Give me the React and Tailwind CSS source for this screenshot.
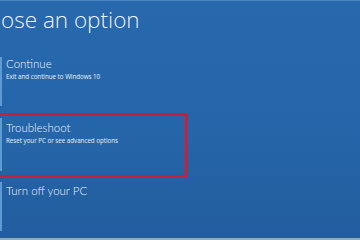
const OPTIONS = [
  { title: "Continue", desc: "Exit and continue to Windows 10", bar: "mt-[24px] h-[49px]", text: "pt-[0px]" },
  { title: "Troubleshoot", desc: "Reset your PC or see advanced options", bar: "mt-[12px] h-[53px]", text: "pt-[3px]" },
  { title: "Turn off your PC", desc: "", bar: "mt-[11px] h-[49px]", text: "pt-[2px]" },
];

function Option({ title, desc, bar, text }) {
  return (
    <div className={`flex ${bar}`}>
      <div className="w-[2px] bg-[#5f9bd3]" />
      <div className={`pl-[4px] ${text}`}>
        <div
          className="text-[11.5px] leading-[14px] font-light text-white/95"
          style={{ fontFamily: 'Lato, "Open Sans", sans-serif' }}
        >
          {title}
        </div>
        {desc && (
          <div className="mt-[2px] text-[6.2px] leading-[8px] text-white/90">{desc}</div>
        )}
      </div>
    </div>
  );
}

export default function App() {
  return (
    <div
      className="relative h-[240px] w-[360px] overflow-hidden bg-gradient-to-b from-[#2868ad] via-[#2566aa] to-[#225d9e]"
      style={{ fontFamily: '"Open Sans", "Noto Sans", sans-serif' }}
    >
      <div className="h-[1px] bg-[#4f86c2]" />
      <h1 className="pl-[1px] pt-[6px] text-[22.5px] font-light leading-[26px] text-white/95">
        ose an option
      </h1>
      {OPTIONS.map((o) => (
        <Option key={o.title} {...o} />
      ))}

      {/* highlight box */}
      <div className="absolute left-[-4px] top-[113px] h-[65px] w-[192px] border-[3px] border-[#c7203c]" />

      <div className="absolute bottom-0 left-0 h-[2px] w-full bg-[#8fa9c6]" />
    </div>
  );
}
